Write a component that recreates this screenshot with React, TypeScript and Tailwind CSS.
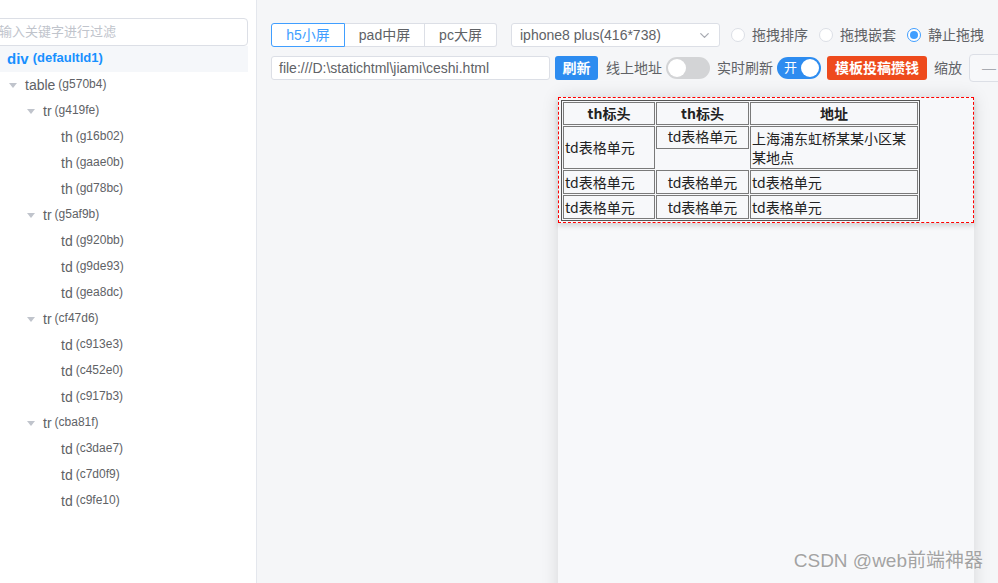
import { ChevronDown } from "lucide-react";

type Node = {
  level: number;
  tag: string;
  id: string;
  arrow?: boolean;
  active?: boolean;
};

const nodes: Node[] = [
  { level: 0, tag: "div", id: "defaultId1", arrow: true, active: true },
  { level: 1, tag: "table", id: "g570b4", arrow: true },
  { level: 2, tag: "tr", id: "g419fe", arrow: true },
  { level: 3, tag: "th", id: "g16b02" },
  { level: 3, tag: "th", id: "gaae0b" },
  { level: 3, tag: "th", id: "gd78bc" },
  { level: 2, tag: "tr", id: "g5af9b", arrow: true },
  { level: 3, tag: "td", id: "g920bb" },
  { level: 3, tag: "td", id: "g9de93" },
  { level: 3, tag: "td", id: "gea8dc" },
  { level: 2, tag: "tr", id: "cf47d6", arrow: true },
  { level: 3, tag: "td", id: "c913e3" },
  { level: 3, tag: "td", id: "c452e0" },
  { level: 3, tag: "td", id: "c917b3" },
  { level: 2, tag: "tr", id: "cba81f", arrow: true },
  { level: 3, tag: "td", id: "c3dae7" },
  { level: 3, tag: "td", id: "c7d0f9" },
  { level: 3, tag: "td", id: "c9fe10" },
];

const indent = ["pl-0", "pl-[18px]", "pl-[36px]", "pl-[54px]"];

const font = "font-['Liberation_Sans','Noto_Sans_CJK_SC',sans-serif]";

function TreeRow({ node }: { node: Node }) {
  return (
    <div
      className={`flex h-[26px] items-center ${indent[node.level]} ${
        node.active ? "bg-[#f5f7fa]" : ""
      }`}
    >
      <span className="flex w-[24px] items-center justify-center">
        {node.arrow && (
          <span className="h-0 w-0 border-l-[4px] border-r-[4px] border-t-[5px] border-l-transparent border-r-transparent border-t-[#c0c4cc]" />
        )}
      </span>
      {node.active ? (
        <span className="font-bold text-[#1890ff]">
          <span className="text-[15px]">{node.tag}</span>
          <span className="relative -top-[2px] ml-1 text-[13px]">({node.id})</span>
        </span>
      ) : (
        <span className="text-[#606266]">
          <span className="text-[14px]">{node.tag}</span>
          <span className="relative -top-[2px] ml-[3px] text-[12px]">({node.id})</span>
        </span>
      )}
    </div>
  );
}

function Radio({ label, checked }: { label: string; checked?: boolean }) {
  return (
    <div className="flex shrink-0 items-center">
      <span
        className={`flex h-[14px] w-[14px] items-center justify-center rounded-full border bg-white ${
          checked ? "border-[#409eff]" : "border-[#dcdfe6]"
        }`}
      >
        {checked && <span className="h-[8px] w-[8px] rounded-full bg-[#409eff]" />}
      </span>
      <span className="ml-[7px] text-[14px] text-[#606266]">{label}</span>
    </div>
  );
}

const cell = "border border-[#7a7a7a] px-[1px] py-0 leading-[19px]";

export default function App() {
  return (
    <div className={`relative flex h-[583px] w-[998px] overflow-hidden bg-[#f5f6f8] ${font}`}>
      {/* left tree panel */}
      <aside className="w-[257px] shrink-0 overflow-hidden border-r border-[#e4e7ed] bg-white">
        <div className="-ml-[17px] w-[265px]">
          <div className="mt-[18px] flex h-[28px] items-center rounded-[4px] border border-[#dcdfe6] px-[15px] text-[13px] text-[#c0c4cc]">
            输入关键字进行过滤
          </div>
          {nodes.map((n) => (
            <TreeRow key={n.id} node={n} />
          ))}
        </div>
      </aside>

      {/* editor */}
      <main className="min-w-0 flex-1 overflow-hidden">
        <div className="pl-[14px] pt-[23px]">
          <div className="flex h-[24px] items-center whitespace-nowrap">
            <div className="flex h-[24px] shrink-0 text-[14px] text-[#606266]">
              <span className="flex w-[74px] items-center justify-center rounded-l-[3px] border border-[#409eff] bg-white text-[#409eff]">
                h5小屏
              </span>
              <span className="flex w-[80px] items-center justify-center border-y border-r border-[#dcdfe6] bg-white">
                pad中屏
              </span>
              <span className="flex w-[72px] items-center justify-center rounded-r-[3px] border-y border-r border-[#dcdfe6] bg-white">
                pc大屏
              </span>
            </div>
            <div className="ml-[14px] flex h-[24px] w-[209px] shrink-0 items-center justify-between rounded-[3px] border border-[#dcdfe6] bg-white pl-[8px] pr-[7px] text-[14px] text-[#606266]">
              <span>iphone8 plus(416*738)</span>
              <ChevronDown size={15} className="text-[#a8abb2]" />
            </div>
            <div className="ml-[11px] flex shrink-0 items-center gap-[11px]">
              <Radio label="拖拽排序" />
              <Radio label="拖拽嵌套" />
              <Radio label="静止拖拽" checked />
            </div>
          </div>

          <div className="mt-[9px] flex h-[24px] items-center whitespace-nowrap text-[14px] text-[#606266]">
            <div className="flex h-[24px] w-[279px] shrink-0 items-center rounded-[3px] border border-[#dcdfe6] bg-white px-[7px]">
              file:///D:\statichtml\jiami\ceshi.html
            </div>
            <span className="ml-[5px] flex h-[24px] w-[43px] shrink-0 items-center justify-center rounded-[3px] bg-[#2d8cf0] font-bold text-white">
              刷新
            </span>
            <span className="ml-[8px] shrink-0">线上地址</span>
            <span className="ml-[4px] flex h-[22px] w-[44px] shrink-0 items-center rounded-full bg-[#d3d4d6] pl-[2px]">
              <span className="h-[18px] w-[18px] rounded-full bg-white" />
            </span>
            <span className="ml-[7px] shrink-0">实时刷新</span>
            <span className="ml-[4px] flex h-[22px] w-[44px] shrink-0 items-center justify-between rounded-full bg-[#2d8cf0] pl-[7px] pr-[2px] text-[13px] text-white">
              开
              <span className="h-[18px] w-[18px] rounded-full bg-white" />
            </span>
            <span className="ml-[6px] flex h-[24px] w-[100px] shrink-0 items-center justify-center rounded-[3px] bg-[#ee4a1c] font-bold text-white">
              模板投稿攒钱
            </span>
            <span className="ml-[7px] shrink-0">缩放</span>
            <span className="ml-[7px] flex h-[28px] w-[40px] shrink-0 items-center justify-center rounded-[4px] border border-[#dcdfe6] bg-[#f7f8fa] text-[#a8abb2]">
              —
            </span>
          </div>

          {/* device canvas */}
          <div className="ml-[287px] mt-[17px] h-[520px] w-[416px] bg-[#f7f8fa] shadow-[0_0_16px_rgba(0,0,0,0.13)]">
            <div className="h-[126px] pl-[3px] pt-[3px] shadow-[0_3px_5px_rgba(0,0,0,0.14)] outline-1 -outline-offset-1 outline-dashed outline-[#ff0000]">
              <table className="w-[359px] table-fixed border-separate border-spacing-[1px] border border-[#555] text-[14px] text-[#222] font-['Noto_Sans_CJK_SC',sans-serif]">
                <colgroup>
                  <col className="w-[92px]" />
                  <col className="w-[93px]" />
                  <col />
                </colgroup>
                <tbody>
                  <tr>
                    <th className={`${cell} h-[23px] text-center font-bold`}>th标头</th>
                    <th className={`${cell} text-center font-bold`}>th标头</th>
                    <th className={`${cell} text-center font-bold`}>地址</th>
                  </tr>
                  <tr>
                    <td className={`${cell} h-[43px] text-left`}>td表格单元</td>
                    <td className="p-0 align-top">
                      <div className={`${cell} h-[23px] text-center`}>td表格单元</div>
                    </td>
                    <td className={`${cell} text-left`}>上海浦东虹桥某某小区某某地点</td>
                  </tr>
                  <tr>
                    <td className={`${cell} h-[24px] text-left`}>td表格单元</td>
                    <td className={`${cell} text-center`}>td表格单元</td>
                    <td className={`${cell} text-left`}>td表格单元</td>
                  </tr>
                  <tr>
                    <td className={`${cell} h-[24px] text-left`}>td表格单元</td>
                    <td className={`${cell} text-center`}>td表格单元</td>
                    <td className={`${cell} text-left`}>td表格单元</td>
                  </tr>
                </tbody>
              </table>
            </div>
          </div>
        </div>
      </main>

      <span className="absolute bottom-[8px] right-[15px] text-[19px] text-[#a3a3a3] [text-shadow:0_0_2px_#fff]">
        CSDN @web前端神器
      </span>
    </div>
  );
}
